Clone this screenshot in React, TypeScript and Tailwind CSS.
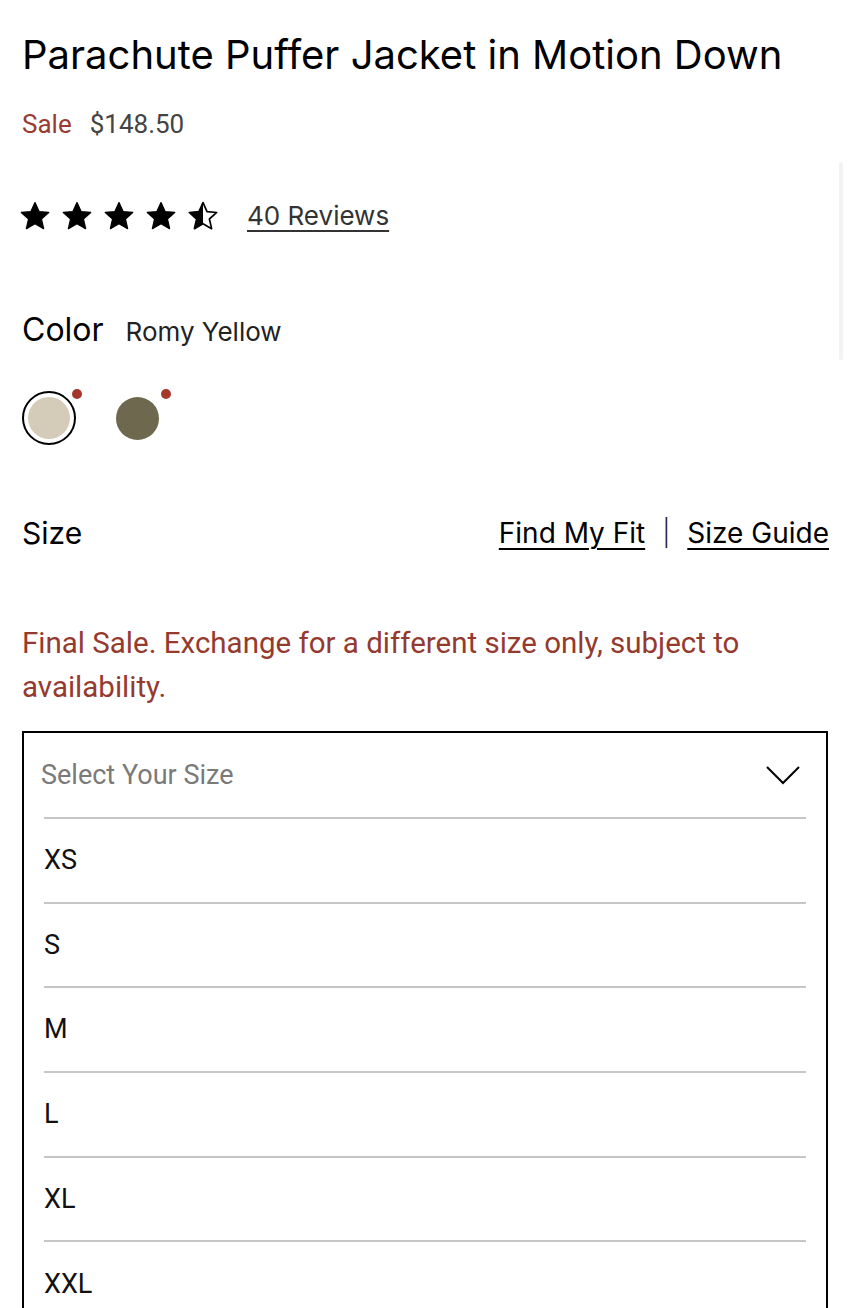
import React from "react";

const STAR = "M12 1.2l3.1 6.9 7.4.7-5.6 5 1.7 7.4L12 17.4 5.4 21.2l1.7-7.4-5.6-5 7.4-.7z";

const Star = ({ half = false }: { half?: boolean }) => (
  <svg width="32" height="30" viewBox="0 0 24 23" className="block">
    {half ? (
      <>
        <defs>
          <clipPath id="lh">
            <rect x="0" y="0" width="12" height="23" />
          </clipPath>
        </defs>
        <path d={STAR} fill="none" stroke="#000" strokeWidth="1.3" strokeLinejoin="round" />
        <path d={STAR} fill="#000" clipPath="url(#lh)" />
      </>
    ) : (
      <path d={STAR} fill="#000" stroke="#000" strokeWidth="1" strokeLinejoin="round" />
    )}
  </svg>
);

const inter = { fontFamily: "Inter, 'Liberation Sans', sans-serif" };
const roboto = { fontFamily: "Roboto, 'Liberation Sans', sans-serif" };

export default function App() {
  const sizes = ["XS", "S", "M", "L", "XL", "XXL"];
  return (
    <div className="relative w-[850px] h-[1308px] overflow-hidden bg-white text-black" style={inter}>
      <div className="absolute right-[7px] top-[162px] w-[4px] h-[198px] bg-[#f3f3f3] rounded-full" />
      <div className="px-[22px] pt-[30px]">
        <h1 className="text-[40px] leading-[50px] font-normal whitespace-nowrap">
          Parachute Puffer Jacket in Motion Down
        </h1>
        <div className="mt-[28px] flex items-baseline gap-[18px] text-[26px] leading-[32px]" style={roboto}>
          <span className="text-[#9a3b31]">Sale</span>
          <span className="text-[#444]">$148.50</span>
        </div>
        <div className="mt-[60px] h-[32px] flex items-center">
          <div className="flex gap-[10px] -ml-[3px]">
            <Star />
            <Star />
            <Star />
            <Star />
            <Star half />
          </div>
          <a className="ml-[28px] text-[26px] leading-[32px] text-[#333] underline underline-offset-[5px] decoration-[1.5px]">
            40 Reviews
          </a>
        </div>
        <div className="mt-[78px] h-[40px] flex items-baseline gap-[22px]">
          <span className="text-[32px] leading-[40px]">Color</span>
          <span className="text-[26px] leading-[32px] text-[#222]">Romy Yellow</span>
        </div>
        <div className="mt-[41px] flex items-center gap-[40px]">
          <div className="relative w-[54px] h-[54px] rounded-full border-2 border-black flex items-center justify-center">
            <div className="w-[42px] h-[42px] rounded-full bg-[#d4ccb8]" />
            <div className="absolute left-[48px] -top-[4px] w-[10px] h-[10px] rounded-full bg-[#a5362a]" />
          </div>
          <div className="relative w-[43px] h-[43px] rounded-full bg-[#6e694e]">
            <div className="absolute left-[45px] -top-[8px] w-[10px] h-[10px] rounded-full bg-[#a5362a]" />
          </div>
        </div>
        <div className="mt-[68px] flex items-center justify-between">
          <span className="text-[30px] leading-[40px]">Size</span>
          <div className="flex items-center text-[28px] leading-[40px] -mr-[1px]">
            <a className="underline underline-offset-[5px] decoration-[1.5px]">Find My Fit</a>
            <span className="mx-[17px] text-[26px] font-light text-[#222]">|</span>
            <a className="underline underline-offset-[5px] decoration-[1.5px]">Size Guide</a>
          </div>
        </div>
        <p className="mt-[68px] text-[29.5px] leading-[44px] text-[#943a2f]" style={roboto}>
          Final Sale. Exchange for a different size only, subject to availability.
        </p>
        <div className="mt-[22px] border-2 border-black" style={roboto}>
          <div className="flex items-center justify-between pl-[17px] pr-[26px] h-[84px]">
            <span className="text-[27px] text-[#7a7a7a]">Select Your Size</span>
            <svg width="34" height="20" viewBox="0 0 34 20" fill="none">
              <path d="M1 2l16 16L33 2" stroke="#000" strokeWidth="2" />
            </svg>
          </div>
          <div className="px-[20px]">
            {sizes.map((s) => (
              <div key={s} className="border-t-2 border-[#c6c6c6] h-[84.7px] flex items-center">
                <span className="text-[27px] text-[#111]">{s}</span>
              </div>
            ))}
          </div>
        </div>
      </div>
    </div>
  );
}
